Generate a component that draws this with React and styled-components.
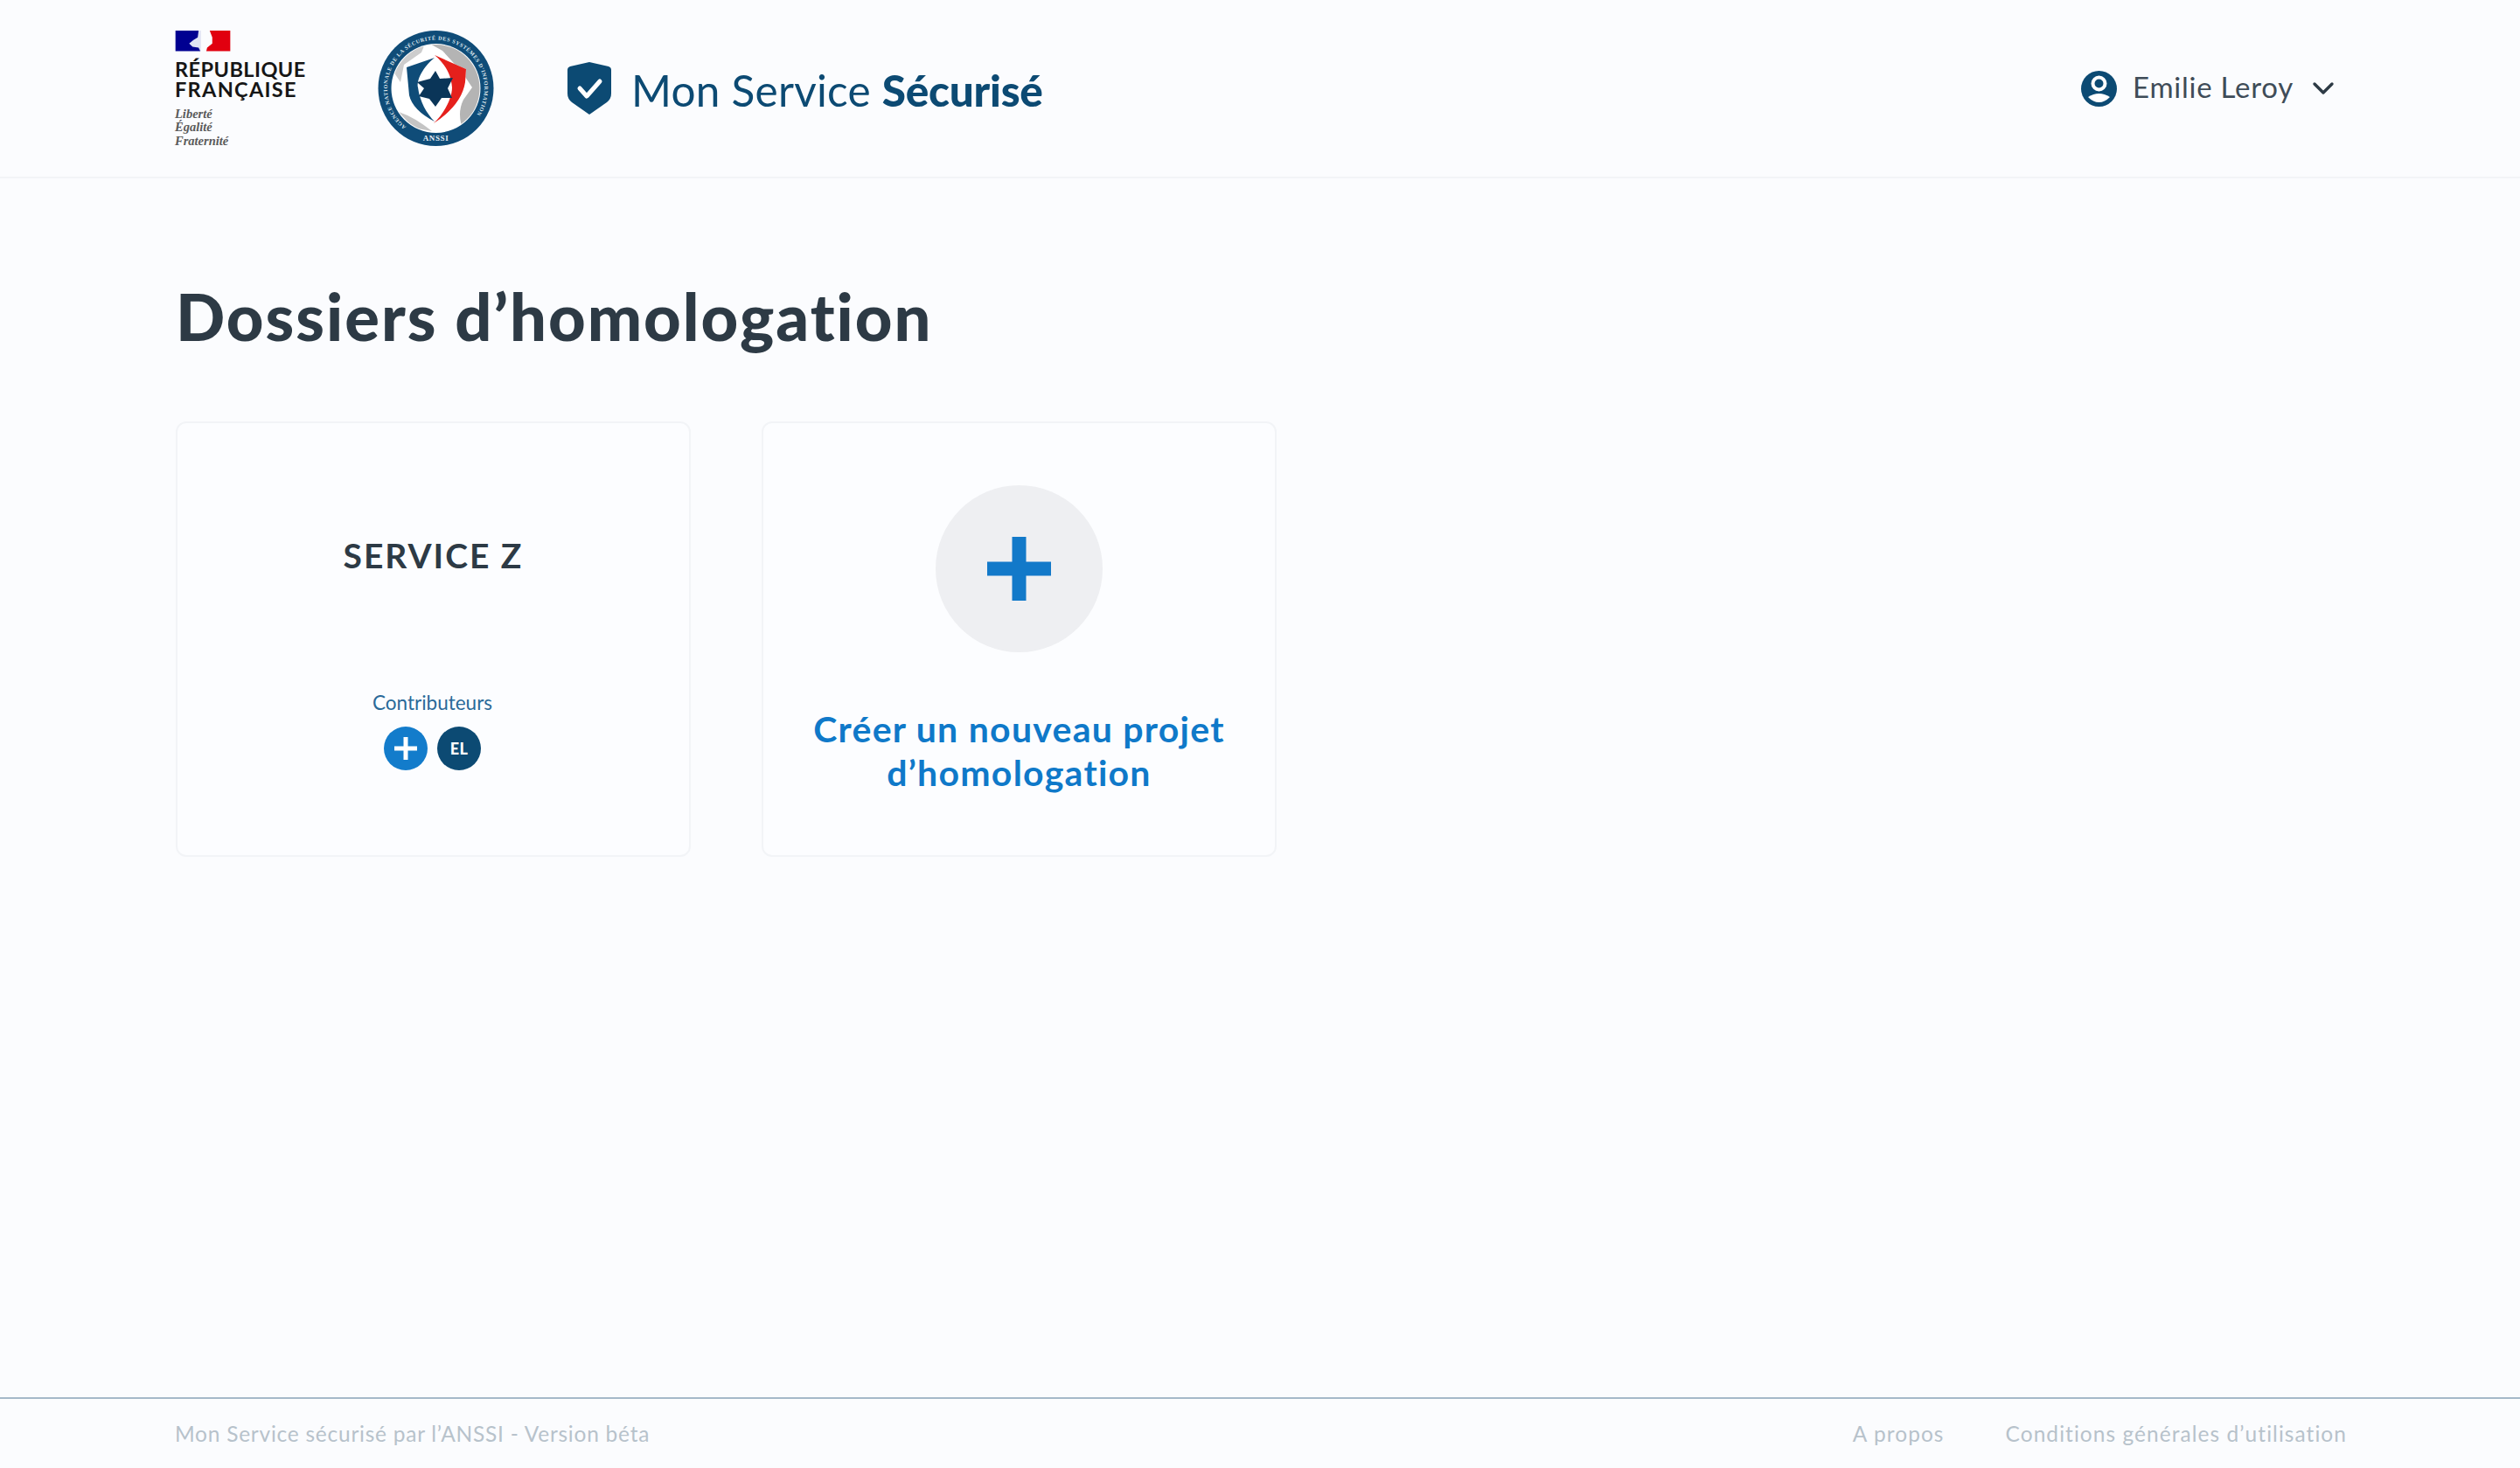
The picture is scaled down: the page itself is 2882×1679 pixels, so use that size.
import React from "react";
import styled, { createGlobalStyle } from "styled-components";

const Global = createGlobalStyle`
  html, body { margin: 0; padding: 0; background: #fbfcfe; }
  body { font-family: Lato, "Noto Sans", sans-serif; color: #2d3a45; }
  * { box-sizing: border-box; }
`;
const Page = styled.div`display:flex;flex-direction:column;min-height:100vh;background:#fbfcfe;`;
const Header = styled.header`
  display:flex;align-items:center;height:204px;padding:0 212px 0 200px;border-bottom:2px solid #f2f4f7;
`;
const RepublicBlock = styled.div`display:flex;flex-direction:column;width:232px;height:134px;margin-top:2px;`;
const RepublicName = styled.div`
  margin-top:9px;font:700 23.5px/23.5px "Lato",sans-serif;color:#161616;
`;
const NameLine = styled.div`letter-spacing:${p => p.$spacing}px;`;
const Motto = styled.div`
  margin-top:8px;font:italic 700 14.5px/15.5px "Liberation Serif",serif;color:#5a5a5a;
`;
const Seal = styled.svg`width:133px;height:134px;flex:none;`;
const Brand = styled.div`display:flex;align-items:center;margin-left:84px;`;
const ShieldIcon = styled.svg`width:50px;height:60px;flex:none;`;
const BrandName = styled.div`
  margin:4px 0 0 23px;font-size:49.5px;line-height:60px;font-weight:400;color:#0c4a73;letter-spacing:.25px;
  b{font-weight:900;letter-spacing:-.25px;}
`;
const User = styled.div`margin-left:auto;display:flex;align-items:center;`;
const UserIcon = styled.svg`width:41px;height:41px;`;
const UserName = styled.span`margin-left:18px;font-size:33px;line-height:40px;color:#3f4c58;letter-spacing:.75px;position:relative;top:-2px;`;
const Chevron = styled.svg`margin-left:21px;width:26px;height:16px;`;
const Main = styled.main`flex:1;padding:113px 0 0 201px;`;
const Title = styled.h1`
  margin:0 0 75px;font-size:74px;line-height:90px;font-weight:900;color:#2d3a45;letter-spacing:2px;
`;
const Cards = styled.div`display:flex;gap:81px;`;
const Card = styled.div`
  width:589px;height:498px;border:2px solid #f2f4f7;border-radius:12px;background:#fcfdff;
  display:flex;flex-direction:column;align-items:center;
`;
const ServiceName = styled.h2`
  margin:126px 0 0;font-size:39px;line-height:50px;font-weight:700;color:#2d3a45;letter-spacing:2px;
`;
const ContribLabel = styled.div`margin:131px 2px 0 0;font-size:22.5px;line-height:26px;color:#2a6a99;`;
const Avatars = styled.div`display:flex;gap:11px;margin-top:14px;margin-right:2px;`;
const Avatar = styled.div`
  width:50px;height:50px;border-radius:50%;display:flex;align-items:center;justify-content:center;
  background:${p => p.$bg};color:#fff;font-size:18px;font-weight:900;letter-spacing:.5px;
`;
const PlusBubble = styled.div`
  width:191px;height:191px;margin-top:71px;border-radius:50%;background:#eeeff2;display:flex;align-items:center;justify-content:center;
`;
const CreateText = styled.div`
  margin-top:63px;text-align:center;font-size:41px;line-height:50px;font-weight:700;color:#0f79c9;letter-spacing:1.25px;
`;
const Footer = styled.footer`
  display:flex;align-items:center;height:81px;padding:0 198px 0 200px;border-top:2px solid #a5b9c9;
  font-size:24.5px;color:#b7c2cb;letter-spacing:.75px;
`;
const FooterLinks = styled.nav`margin-left:auto;display:flex;gap:70px;letter-spacing:1.05px;`;

const Flag = () => (
  <svg width="65" height="24" viewBox="0 0 65 24">
    <rect x="0" y="0" width="29" height="24" fill="#000091" />
    <path d="M29 0 H27 L26 8 L21 11 L16 15 L20 19 L27 20 L29 24 Z" fill="#dfe3f4" />
    <path d="M40 0 H64 V24 H36 L37 20 L43 15 L43 8 Z" fill="#e1000f" />
  </svg>
);

const Anssi = () => (
  <Seal viewBox="0 0 133 134">
    <defs>
      <path id="arcRing" d="M32.5 111 A55.5 55.5 0 1 1 111.5 99.5" />
      <clipPath id="globe"><circle cx="66.5" cy="67" r="50" /></clipPath>
    </defs>
    <circle cx="66.5" cy="67" r="66" fill="#0f4c78" />
    <circle cx="66.5" cy="67" r="51" fill="#fff" />
    <g clipPath="url(#globe)">
      <path d="M56 14 Q100 8 120 50 Q122 90 98 116 Q90 96 98 80 L108 66 L96 48 L74 24 Z" fill="#b4b4b4" />
      <path d="M18 48 L32 24 L54 16 L50 26 L30 40 L26 60 Z" fill="#cdcdcd" />
      <path d="M24 94 Q42 100 62 116 L40 112 Z" fill="#c4c4c4" />
    </g>
    <path d="M65 29 L33 43 L36 75 Q40 92 65 107 Q96 86 100 60 L101 45 Z" fill="#fff" />
    <path d="M33 43 L65 32 C52 42 44 58 46 66 C48 82 56 96 65 105 Q40 92 36 75 Z" fill="#0f4c78" />
    <path d="M65 29 L101 45 L100 60 Q96 86 64 107 C74 98 85 80 85 66 C84 52 78 40 65 29 Z" fill="#e5201c" />
    <path d="M66 47 L71 56 L86 55 L80 67 L85 78 L73 78 L66 88 L59 79 L47 76 L53 67 L45 60 L60 56 Z" fill="#0a3558" />
    <text fontFamily="Liberation Serif, serif" fontSize="6.2" fontWeight="700" fill="#dfe8ef">
      <textPath href="#arcRing" textLength="256" lengthAdjust="spacing">AGENCE NATIONALE DE LA SÉCURITÉ DES SYSTÈMES D'INFORMATION</textPath>
    </text>
    <text x="66.5" y="127" textAnchor="middle" fontFamily="Liberation Serif, serif" fontSize="9" fontWeight="700" fill="#e6edf3" letterSpacing=".6">ANSSI</text>
  </Seal>
);

const Plus = ({ size, bar, color }) => (
  <svg width={size} height={size} viewBox={`0 0 ${size} ${size}`}>
    <rect x={(size - bar) / 2} y="0" width={bar} height={size} fill={color} />
    <rect x="0" y={(size - bar) / 2} width={size} height={bar} fill={color} />
  </svg>
);

export default function App() {
  return (
    <Page>
      <Global />
      <Header>
        <RepublicBlock>
          <Flag />
          <RepublicName>
            <NameLine $spacing={0.45}>RÉPUBLIQUE</NameLine>
            <NameLine $spacing={1.3}>FRANÇAISE</NameLine>
          </RepublicName>
          <Motto>Liberté<br />Égalité<br />Fraternité</Motto>
        </RepublicBlock>
        <Anssi />
        <Brand>
          <ShieldIcon viewBox="0 0 50 60">
            <path d="M25 0 L47 5 Q50 6 50 9 V36 Q50 42 45 46 L25 60 L5 46 Q0 42 0 36 V9 Q0 6 3 5 Z" fill="#0c4a73" />
            <path d="M14 30 L22 39 L37 22" fill="none" stroke="#fff" strokeWidth="5" strokeLinecap="round" strokeLinejoin="round" />
          </ShieldIcon>
          <BrandName>Mon Service <b>Sécurisé</b></BrandName>
        </Brand>
        <User>
          <UserIcon viewBox="0 0 41 41">
            <circle cx="20.5" cy="20.5" r="20.5" fill="#0c4a73" />
            <circle cx="20.5" cy="14.5" r="7" fill="none" stroke="#fff" strokeWidth="4" />
            <path d="M8 30 Q20.5 22 33 30 Q27 36 20.5 36 Q14 36 8 30 Z" fill="#fff" />
          </UserIcon>
          <UserName>Emilie Leroy</UserName>
          <Chevron viewBox="0 0 26 16">
            <path d="M3 3 L13 13 L23 3" fill="none" stroke="#2d3a45" strokeWidth="3.4" strokeLinecap="round" strokeLinejoin="round" />
          </Chevron>
        </User>
      </Header>
      <Main>
        <Title>Dossiers d’homologation</Title>
        <Cards>
          <Card>
            <ServiceName>SERVICE Z</ServiceName>
            <ContribLabel>Contributeurs</ContribLabel>
            <Avatars>
              <Avatar $bg="#137ccb"><Plus size={26} bar={5} color="#fff" /></Avatar>
              <Avatar $bg="#0c4a73">EL</Avatar>
            </Avatars>
          </Card>
          <Card>
            <PlusBubble><Plus size={73} bar={16} color="#1279c9" /></PlusBubble>
            <CreateText>Créer un nouveau projet<br />d’homologation</CreateText>
          </Card>
        </Cards>
      </Main>
      <Footer>
        <span>Mon Service sécurisé par l’ANSSI - Version béta</span>
        <FooterLinks>
          <span>A propos</span>
          <span>Conditions générales d’utilisation</span>
        </FooterLinks>
      </Footer>
    </Page>
  );
}
